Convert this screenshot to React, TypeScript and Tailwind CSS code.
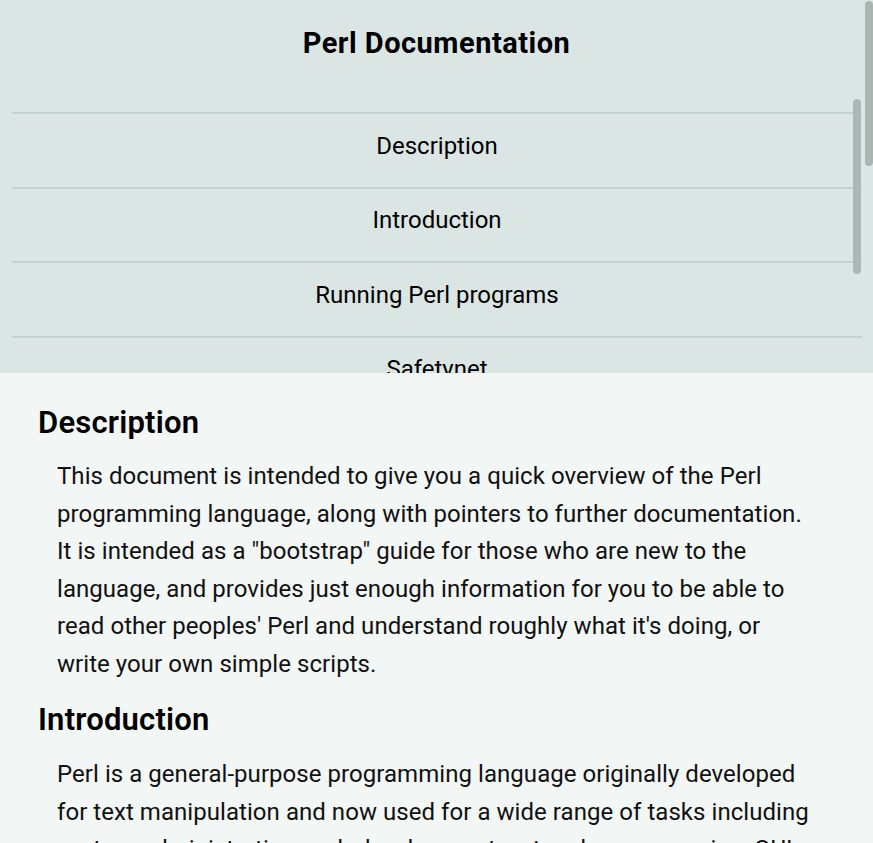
const navItems = ["Description", "Introduction", "Running Perl programs", "Safetynet", "Basic syntax overview"];

const descLines = [
  "This document is intended to give you a quick overview of the Perl",
  "programming language, along with pointers to further documentation.",
  'It is intended as a "bootstrap" guide for those who are new to the',
  "language, and provides just enough information for you to be able to",
  "read other peoples' Perl and understand roughly what it's doing, or",
  "write your own simple scripts.",
];

const introLines = [
  "Perl is a general-purpose programming language originally developed",
  "for text manipulation and now used for a wide range of tasks including",
  "system administration, web development, network programming, GUI",
  "development, and more.",
];

function Para({ lines }: { lines: string[] }) {
  return (
    <p className="pl-[19px] text-[24px] leading-[37.5px] tracking-[0.05px] text-[#111]">
      {lines.map((l) => (
        <span key={l} className="block whitespace-nowrap">
          {l}
        </span>
      ))}
    </p>
  );
}

export default function App() {
  return (
    <div
      className="relative h-[843px] w-[873px] overflow-hidden bg-[#f2f6f5] text-black"
      style={{ fontFamily: "Roboto, 'Noto Sans', sans-serif" }}
    >
      <header className="relative h-[373px] overflow-hidden bg-[#dbe6e4]">
        <div className="flex h-[112px] justify-center pt-[25px]">
          <h1 className="text-[29px] font-bold leading-[36px] tracking-[0.5px]">Perl Documentation</h1>
        </div>
        <nav className="ml-[12px] mr-[11px]">
          {navItems.map((item) => (
            <div
              key={item}
              className="flex h-[74.5px] items-center justify-center border-t-2 border-[#c2d3cf] pb-[9px] text-[24px]"
            >
              {item}
            </div>
          ))}
        </nav>
        <div className="absolute left-[853px] top-[99px] h-[175px] w-[8px] rounded-full bg-[#abb8b4]" />
      </header>

      <main className="pl-[38px] pr-[30px]">
        <h2 className="pt-[32px] pb-[17px] text-[31px] font-semibold leading-[36px] tracking-[0.2px]">Description</h2>
        <Para lines={descLines} />
        <h2 className="pt-[19px] pb-[18px] text-[31px] font-semibold leading-[36px] tracking-[0.2px]">Introduction</h2>
        <Para lines={introLines} />
      </main>

      <div className="absolute left-[865px] top-[1px] h-[165px] w-[8px] rounded-full bg-[#aab4b1]" />
    </div>
  );
}
